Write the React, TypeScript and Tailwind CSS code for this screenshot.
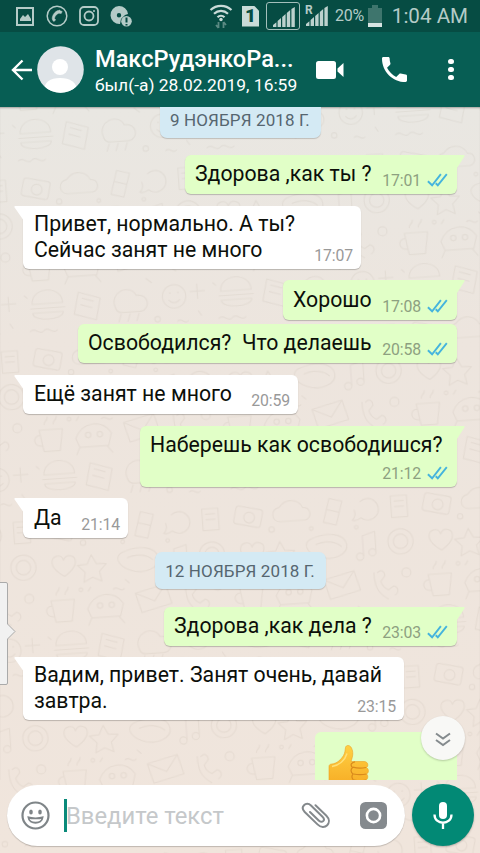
import clsx from 'clsx';

interface Message {
  id: number;
  kind: 'in' | 'out' | 'date' | 'emoji';
  lines: string[];
  time?: string;
  tail?: boolean;
  box: string;
}

const messages: Message[] = [
  { id: 1, kind: 'date', lines: ['9 НОЯБРЯ 2018 Г.'], box: 'w-[161px] h-[37px] mt-[-6px] mx-auto' },
  { id: 2, kind: 'out', lines: ['Здорова ,как ты ?'], time: '17:01', tail: true, box: 'w-[272px] h-[39px] mt-[17px]' },
  { id: 3, kind: 'in', lines: ['Привет, нормально. А ты?', 'Сейчас занят не много'], time: '17:07', tail: true, box: 'w-[338px] h-[63px] mt-[12px]' },
  { id: 4, kind: 'out', lines: ['Хорошо'], time: '17:08', tail: true, box: 'w-[174px] h-[40px] mt-[11px] pt-px' },
  { id: 5, kind: 'out', lines: ['Освободился?  Что делаешь'], time: '20:58', box: 'w-[379px] h-[39px] mt-[4px]' },
  { id: 6, kind: 'in', lines: ['Ещё занят не много'], time: '20:59', tail: true, box: 'w-[275px] h-[39px] mt-[12px]' },
  { id: 7, kind: 'out', lines: ['Наберешь как освободишся?'], time: '21:12', tail: true, box: 'w-[317px] h-[61px] mt-[12px]' },
  { id: 8, kind: 'in', lines: ['Да'], time: '21:14', tail: true, box: 'w-[105px] h-[40px] mt-[11px] pt-px' },
  { id: 9, kind: 'date', lines: ['12 НОЯБРЯ 2018 Г.'], box: 'w-[171px] h-[37px] mt-[14px] mx-auto' },
  { id: 10, kind: 'out', lines: ['Здорова ,как дела ?'], time: '23:03', tail: true, box: 'w-[293px] h-[39px] mt-[18px]' },
  { id: 11, kind: 'in', lines: ['Вадим, привет. Занят очень, давай', 'завтра.'], time: '23:15', tail: true, box: 'w-[381px] h-[63px] mt-[11px]' },
  { id: 12, kind: 'emoji', lines: [], box: 'w-[142px] h-[70px] mt-[12px]' },
];

function Wallpaper() {
  return (
    <svg className="absolute inset-0 h-full w-full" fill="none" stroke="#7a6a58" strokeWidth="1.3" strokeLinecap="round" strokeLinejoin="round">
      <defs>
        <pattern id="doodles" width="210" height="190" patternUnits="userSpaceOnUse" patternTransform="rotate(-4) scale(0.9)">
          <g opacity="0.08">
            <rect x="10" y="12" width="30" height="20" rx="3" transform="rotate(14 25 22)" />
            <circle cx="26" cy="23" r="6" />
            <path d="M60 14c8-10 22-8 26 2 9 0 11 12 2 14H60c-10-1-10-14 0-16z" />
            <path d="M108 34l8-26 14 4-8 26zM112 20l14 4" />
            <path d="M150 14a12 12 0 1 1 0 18c-5 3-8 3-10 2 4-3 4-8 3-11" />
            <path d="M184 10h18v24h-18zM188 16h10M188 22h10" />
            <path d="M14 58c0-8 11-10 13-2 3-8 14-5 13 3-1 8-13 15-13 15S14 66 14 58z" />
            <path d="M58 52l5 10 11 1-8 8 2 11-10-5-10 5 2-11-8-8 11-1z" />
            <path d="M92 52c20-8 38-4 40 8s-18 18-32 12-16-16-8-20zM98 58c10-4 22-2 28 4" />
            <path d="M150 52v22M150 52l14-4v22" />
            <circle cx="146" cy="75" r="4" />
            <circle cx="160" cy="71" r="4" />
            <circle cx="192" cy="61" r="14" />
            <circle cx="192" cy="61" r="8" />
            <path d="M10 100h26l-4 24H14zM10 106c-8 0-8 12 3 12M16 94c0-4 4-4 4-8M26 94c0-4 4-4 4-8" />
            <path d="M50 112c8-18 30-20 40-4l-4 14H54zM54 122l-4 8M84 122l6 8" />
            <circle cx="64" cy="109" r="3" />
            <circle cx="77" cy="109" r="3" />
            <path d="M104 98l34-8 6 22-34 8zM104 98l21 10 13-18" />
            <path d="M160 94c0 14 2 22 14 30M164 94c4-4 8-1 8 4l-5 6c1 4 4 8 8 10l6-4c5 1 6 7 1 10" />
            <path d="M12 150h34c0-20-34-20-34 0zM10 155h38M12 160h34c0 10-34 10-34 0z" />
            <path d="M64 140l24 8-6 24-24-8zM68 147l12 4M66 154l12 4" />
            <path d="M104 160c-6-18 18-26 24-12 14-2 16 16 4 18h-20c-4 0-7-2-8-6zM110 168l-3 8M120 168l-3 8M130 168l-3 8" />
            <circle cx="170" cy="152" r="13" />
            <path d="M164 156c3 4 9 4 12 0M165 148h1M174 148h1M196 140v16M188 148h16M196 170l3 5M52 92l3-4M140 130l6 5M4 140l3 3M94 82l4 4" />
            <circle cx="50" cy="38" r="3" />
            <circle cx="144" cy="42" r="2" />
            <circle cx="94" cy="40" r="2" />
            <circle cx="44" cy="90" r="2" />
            <circle cx="150" cy="176" r="3" />
            <circle cx="196" cy="96" r="5" />
            <path d="M80 92c4-5 8 5 12 0M8 180c5-6 10 6 15 0s10 6 15 0M172 180c4-5 8 5 12 0" />
          </g>
        </pattern>
      </defs>
      <rect width="100%" height="100%" fill="url(#doodles)" stroke="none" />
    </svg>
  );
}

function Ticks() {
  return (
    <svg className="mb-[3px] ml-[6px] h-[14px] w-[21px] shrink-0" viewBox="0 0 21 14" fill="none" stroke="#45b4dd" strokeWidth="1.9">
      <path d="M.9 8.3l4.2 4L13.9 1.2" />
      <path d="M8.7 10.3l2.1 2L19.8 1.2" />
    </svg>
  );
}

function Tail({ side }: { side: 'in' | 'out' }) {
  return side === 'in' ? (
    <svg className="absolute top-0 left-[-9px] h-[15px] w-[14px]" viewBox="0 0 14 15">
      <path d="M14 0H1.4C.2 0 .1 1 .8 1.8L9 13.5V15h5z" fill="#fff" />
    </svg>
  ) : (
    <svg className="absolute top-0 right-[-8px] h-[15px] w-[14px]" viewBox="0 0 14 15">
      <path d="M0 0h12.6c1.2 0 1.3 1 .6 1.8L6 13v2H0z" fill="#e1ffc7" />
    </svg>
  );
}

function ThumbsUp() {
  return (
    <svg className="mt-[13px] ml-[13px] h-[42px] w-[42px]" viewBox="0 0 42 42">
      <defs>
        <linearGradient id="thumb" x1="0" y1="0" x2="0" y2="1">
          <stop offset="0" stopColor="#ffd043" />
          <stop offset="1" stopColor="#f7ad25" />
        </linearGradient>
      </defs>
      <path
        d="M1 21.500c0-1.500 1-2.500 3-2.500 5-.5 9-4.500 11.500-8.500 1.500-2.500 1.500-5 2-8C18-.3 22-.3 23.500 3c2 4 1.500 8-.5 13.500h13c4.500 0 4.500 5 2.500 6 2.500 1.500 2.500 5.500 0 6.500 2 1.500 1.500 5-.5 6 0 4-3 5-9 5-10 0-20 0-28-4z"
        fill="url(#thumb)"
        stroke="#eda124"
        strokeWidth="0.6"
      />
      <path d="M38 22.500c-4 .8-9 .8-13-.3M38.500 29c-4 .8-9 .8-13 0M38 35c-4 .8-8 .8-12 0M27 16.800c-4 .7-5 3.500-2.500 5.700-2 2-2 4.500.5 6.500-1.500 2-1.500 4 .5 6" stroke="#d98a1c" strokeWidth="1.2" fill="none" />
      <path d="M4 21.500c7-1 13-6 15-13" stroke="#ffe078" strokeWidth="1.5" fill="none" />
    </svg>
  );
}

function Bubble({ message }: { message: Message }) {
  const { kind, lines, time, tail, box } = message;

  if (kind === 'date') {
    return (
      <div className={clsx('flex shrink-0 items-center justify-center rounded-[7px] bg-[#d4eaf4] text-[17px] tracking-[0.12px] whitespace-nowrap text-[#566670] shadow-[0_1px_1px_rgba(0,0,0,0.18)]', box)}>
        <span className="pt-[2px]">{lines[0]}</span>
      </div>
    );
  }

  if (kind === 'emoji') {
    return (
      <div className={clsx('mr-[23px] shrink-0 self-end rounded-[6px] bg-[#e1ffc7]', box)}>
        <ThumbsUp />
      </div>
    );
  }

  const out = kind === 'out';
  return (
    <div
      className={clsx(
        'relative grid shrink-0 rounded-[6px] shadow-[0_1px_1px_rgba(0,0,0,0.22)]',
        out ? 'mr-[23px] self-end bg-[#e1ffc7]' : 'ml-[23px] bg-white',
        tail && (out ? 'rounded-tr-none' : 'rounded-tl-none'),
        box,
      )}
    >
      {tail && <Tail side={out ? 'out' : 'in'} />}
      <div
        className={clsx(
          'pl-[11px] text-[21.25px] leading-[25.5px] whitespace-pre text-[#0c0f0a] [grid-area:1/1]',
          lines.length > 1 ? 'pt-[5px]' : 'pt-[6px]',
          out && '-ml-px',
        )}
      >
        {lines.map((line) => (
          <p key={line}>{line}</p>
        ))}
      </div>
      <div
        className={clsx(
          'flex items-end self-end justify-self-end pb-[4px] text-[15.8px] leading-[18px] tracking-[-0.1px] [grid-area:1/1]',
          out ? 'pr-[9px] text-[#8da080]' : 'pr-[8px] text-[#999]',
        )}
      >
        <span>{time}</span>
        {out && <Ticks />}
      </div>
    </div>
  );
}

function Signal() {
  return (
    <svg className="h-[20px] w-[22px]" viewBox="0 0 22 20" fill="#bdd2ce">
      <path d="M0 20v-2l3.400-2.800V20zM4.600 20v-6L8 11v9zM9.200 20V10l3.400-3v13zM13.800 20V6l3.400-3v17zM18.400 20V2L21.800 0v20z" />
    </svg>
  );
}

function StatusBar() {
  return (
    <div className="flex h-[32px] items-center bg-[#064c43] pl-[16px] text-[#b4cbc7]">
      <svg className="h-[19px] w-[18px]" viewBox="0 0 18 19" fill="none">
        <rect x="1" y="1" width="16" height="17" stroke="currentColor" strokeWidth="2" />
        <path d="M4 14v-2l3-4 2 2 3-3 3 5v2z" fill="currentColor" />
      </svg>
      <svg className="ml-[12px] h-[22px] w-[22px]" viewBox="0 0 22 22" fill="none" stroke="currentColor">
        <circle cx="11" cy="11" r="9.8" strokeWidth="1.5" />
        <path d="M13 5.300l3.200 1.200-1 2-2.400-.3c-2.500 1-4 3-4.300 5.200l1.200 1.500-1.800 1.600c-2-1.200-2.300-3.800-.7-6.800 1.400-2.500 4-4.600 6.800-4.400z" fill="currentColor" strokeWidth=".5" />
      </svg>
      <svg className="ml-[11px] h-[20px] w-[20px]" viewBox="0 0 20 20" fill="none" stroke="currentColor" strokeWidth="1.8">
        <rect x="1" y="1" width="18" height="18" rx="4" />
        <circle cx="10" cy="10" r="4.5" />
        <circle cx="15" cy="5" r="1" fill="currentColor" stroke="none" />
      </svg>
      <svg className="ml-[10px] h-[24px] w-[24px]" viewBox="0 0 24 24" fill="currentColor">
        <path fillRule="evenodd" d="M10 2a9 9 0 0 1 9 8l-3 1-4 4-1 5a9 9 0 1 1-1-18zm0 7a2.200 2.200 0 1 0 0 4.400 2.200 2.200 0 0 0 0-4.400z" />
        <circle cx="17.5" cy="17.3" r="5.3" />
        <path d="M17.500 13.500v5M17.500 20v1.500" stroke="#064c43" strokeWidth="2" />
      </svg>
      <svg className="ml-[76px] h-[25px] w-[24px]" viewBox="0 0 24 25" fill="none" stroke="#c9dbd8" strokeWidth="2.2">
        <path d="M1.500 6c6-5.500 15-5.500 21 0M5 9.700c4-3.800 10-3.800 14 0M8.500 13.300c2-2 5-2 7 0" />
        <circle cx="12" cy="15.5" r="1.7" fill="#c9dbd8" stroke="none" />
        <path d="M9.500 24v-6M7 21l2.500 3M14.500 18v6M14.500 18l2.500 3" stroke="#5b8a83" strokeWidth="1.8" />
      </svg>
      <div className="ml-[9px] flex h-[21px] w-[17px] items-center justify-center bg-[#c9dbd8] text-[19px] font-black text-[#064c43] [clip-path:polygon(0_0,70%_0,100%_25%,100%_100%,0_100%)]">
        1
      </div>
      <div className="ml-[7px] flex h-[28px] w-[34px] items-end rounded-[3px] border-[1.5px] border-[#a4bfbb] pb-[2px] pl-[6px]">
        <Signal />
      </div>
      <div className="relative ml-[6px] h-[21px] w-[22px]">
        <Signal />
        <span className="absolute top-[-3px] left-[-1px] text-[12px] leading-[14px] font-bold">R</span>
      </div>
      <span className="ml-[7px] text-[16px] tracking-[-0.3px]">20%</span>
      <div className="ml-[4px] flex h-[22px] w-[14px] flex-col">
        <div className="mx-auto h-[3px] w-[6px] bg-[#3e756d]" />
        <div className="flex-1 bg-[#3e756d]" />
        <div className="h-[4px] bg-[#d7e4e2]" />
      </div>
      <span className="ml-[10px] pt-px text-[20.6px] whitespace-nowrap">1:04 AM</span>
    </div>
  );
}

function Header() {
  return (
    <header className="flex h-[75px] items-center bg-[#075e54] text-white">
      <svg className="ml-[11px] h-[22px] w-[22px]" viewBox="0 0 22 22" fill="none" stroke="currentColor" strokeWidth="2.4">
        <path d="M21 11H2M11.500 1.500L2 11l9.500 9.500" />
      </svg>
      <svg className="ml-[4px] h-[47px] w-[47px]" viewBox="0 0 47 47">
        <defs>
          <clipPath id="avatar">
            <circle cx="23.5" cy="23.5" r="23.3" />
          </clipPath>
        </defs>
        <g clipPath="url(#avatar)">
          <rect width="47" height="47" fill="#dfe4e8" />
          <circle cx="23" cy="21" r="8" fill="#fff" />
          <path d="M7 45c0-9 6-13 16-13s17 4 17 13v3H7z" fill="#fff" />
        </g>
      </svg>
      <div className="ml-[11px] w-[202px] pt-[3px] whitespace-nowrap">
        <p className="text-[23.6px] leading-[28px] font-medium">МаксРудэнкоРа...</p>
        <p className="text-[17.4px] leading-[25px]">был(-а) 28.02.2019, 16:59</p>
      </div>
      <svg className="ml-[19px] h-[18px] w-[28px]" viewBox="0 0 28 18" fill="currentColor">
        <path d="M2.500 0h15A2.500 2.500 0 0 1 20 2.500v13a2.500 2.500 0 0 1-2.500 2.500h-15A2.500 2.500 0 0 1 0 15.500v-13A2.500 2.500 0 0 1 2.500 0zM21.500 7.500L27.500 2v14l-6-5.500z" />
      </svg>
      <svg className="ml-[38px] h-[25px] w-[25px]" viewBox="3 3 18 18" fill="currentColor">
        <path d="M6.620 10.790c1.440 2.830 3.760 5.140 6.590 6.590l2.200-2.200c.27-.27.67-.36 1.020-.24 1.120.37 2.330.57 3.570.57.55 0 1 .45 1 1V20c0 .55-.45 1-1 1C10.610 21 3 13.390 3 4c0-.55.45-1 1-1h3.500c.55 0 1 .45 1 1 0 1.250.2 2.450.57 3.570.11.35.03.74-.25 1.020z" />
      </svg>
      <div className="ml-[41px] flex flex-col gap-[2.5px]">
        <span className="h-[5.5px] w-[5.5px] rounded-full bg-white" />
        <span className="h-[5.5px] w-[5.5px] rounded-full bg-white" />
        <span className="h-[5.5px] w-[5.5px] rounded-full bg-white" />
      </div>
    </header>
  );
}

function Composer() {
  return (
    <div className="relative flex h-[73px] items-start pt-[5px] pl-[7px]">
      <div className="flex h-[61px] w-[398px] items-center rounded-full bg-white pl-[14px] shadow-[0_1px_1px_rgba(0,0,0,0.2)]">
        <svg className="h-[29px] w-[29px]" viewBox="0 0 29 29" fill="none" stroke="#7f8588" strokeWidth="2.2">
          <circle cx="14.5" cy="14.5" r="13" />
          <ellipse cx="10" cy="11" rx="1.8" ry="2.5" fill="#7f8588" stroke="none" />
          <ellipse cx="19" cy="11" rx="1.8" ry="2.5" fill="#7f8588" stroke="none" />
          <path d="M7.500 16.500c3 1.200 11 1.200 14 0-.5 7-13.500 7-14 0z" strokeWidth="1.9" />
        </svg>
        <div className="ml-[14px] h-[33px] w-[3px] bg-[#0a8a7a]" />
        <span className="-ml-px w-[235px] pt-[3px] text-[23.8px] text-[#c5c8ca]">Введите текст</span>
        <svg className="h-[27px] w-[29px]" viewBox="0 0 29 27" fill="none" stroke="#84898c" strokeWidth="2" strokeLinecap="round">
          <path d="M14.500 3.200l10.900 10.500c3.300 3.300 3 7.200.8 9.500s-6.300 2.600-9.700-.8L3.700 10C1.200 7.500 1.300 5 3 3.200S7.600 1.200 10 3.500l11.500 11.200c1.800 1.800 1.800 3.300.7 4.400s-2.900 1-4.500-.6L9 10" />
        </svg>
        <svg className="ml-[30px] h-[27px] w-[27px]" viewBox="0 0 27 27">
          <rect width="27" height="27" rx="5.5" fill="#858a8e" />
          <circle cx="13.5" cy="13.5" r="6.6" fill="none" stroke="#fff" strokeWidth="2.6" />
        </svg>
      </div>
      <div className="-mt-px ml-[7px] flex h-[62px] w-[62px] items-center justify-center rounded-full bg-[#028975] shadow-[0_1px_2px_rgba(0,0,0,0.25)]">
        <svg className="h-[27px] w-[20px]" viewBox="0 0 20 27" fill="none" stroke="#fff" strokeWidth="2.3">
          <rect x="6" y="0" width="8" height="17" rx="4" fill="#fff" stroke="none" />
          <path d="M1.500 12.500c0 11 17 11 17 0M10 20.500V27" />
        </svg>
      </div>
    </div>
  );
}

export default function App() {
  return (
    <div className="relative flex h-[853px] w-[480px] flex-col overflow-hidden bg-linear-to-b from-[#e7e8e4] via-[#ede5de] via-40% to-[#f0e5dc] font-['Roboto',sans-serif]">
      <Wallpaper />
      <div className="relative">
        <StatusBar />
        <Header />
      </div>
      <main className="relative flex h-[673px] flex-col overflow-hidden shadow-[inset_0_2px_2px_-1px_rgba(0,0,0,0.3)]">
        {messages.map((message) => (
          <Bubble key={message.id} message={message} />
        ))}
      </main>
      <Composer />

      {/* edge panel handle */}
      <svg className="absolute top-[581px] left-0 h-[106px] w-[17px]" viewBox="0 0 17 106" fill="#f1f1f1" stroke="#aaa" strokeWidth="1">
        <path d="M-1 1.500H6Q7.500 1.500 7.500 3V43L15 50.500 7.500 58V102Q7.500 103.500 6 103.500H-1z" />
      </svg>

      {/* jump to the last message */}
      <div className="absolute top-[716px] left-[421px] flex h-[44px] w-[44px] items-center justify-center rounded-full bg-[#f8f8f6] shadow-[0_1px_2px_rgba(0,0,0,0.2)]">
        <svg className="mt-[2px] h-[15px] w-[16px]" viewBox="0 0 16 15" fill="none" stroke="#858b8e" strokeWidth="2">
          <path d="M1 1.500l7 5 7-5M1 8l7 5 7-5" />
        </svg>
      </div>
    </div>
  );
}
